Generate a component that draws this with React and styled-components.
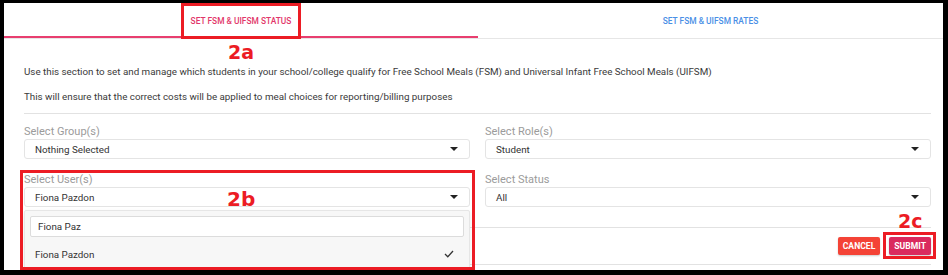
import React from 'react';
import styled, { createGlobalStyle, css } from 'styled-components';

const Global = createGlobalStyle`
  html, body { margin: 0; padding: 0; background: #fff; }
  body { font-family: Roboto, "Liberation Sans", Arial, sans-serif; }
  * { box-sizing: border-box; }
`;

const RED = '#ec1c24';

const Frame = styled.div`
  width: 948px;
  height: 275px;
  border-style: solid;
  border-color: #000;
  border-width: 3px 5px 5px 4px;
  background: #fff;
  overflow: hidden;
`;

const TabBar = styled.div`
  display: grid;
  grid-template-columns: 474px 1fr;
  height: 36px;
  border-bottom: 1px solid #e6e6e6;
`;

const Tab = styled.div`
  display: flex;
  justify-content: center;
  align-items: stretch;
  font-size: 8.4px;
  font-weight: 500;
  text-transform: uppercase;
  color: ${p => (p.$active ? '#e2366a' : '#4a8fe6')};
  box-shadow: ${p => (p.$active ? 'inset 0 -2px 0 #e83e6f' : 'none')};
`;

const TabLabel = styled.span`
  position: relative;
  display: flex;
  align-items: center;
  ${p =>
    p.$marked &&
    css`
      &::after {
        content: '';
        position: absolute;
        top: 0;
        bottom: -1px;
        left: -10px;
        right: -10px;
        border: 3px solid ${RED};
      }
    `}
`;

const Note = styled.span`
  position: absolute;
  font-family: "DejaVu Sans", Verdana, sans-serif;
  font-weight: 700;
  font-size: 19px;
  line-height: 20px;
  color: ${RED};
  text-transform: none;
  white-space: nowrap;
`;

const TabNote = styled(Note)`
  top: calc(100% + 4px);
  left: 50%;
  transform: translateX(-50%);
`;

const Body = styled.div`
  padding: 0 12px 0 20px;
`;

const Para = styled.p`
  margin: ${p => (p.$first ? '25px' : '9px')} 0 0;
  font-size: 9.8px;
  line-height: 16px;
  color: #3a3a3a;
`;

const Rule = styled.div`
  height: 1px;
  background: #e2e2e2;
  margin-top: 8px;
`;

const Grid = styled.div`
  display: grid;
  grid-template-columns: 1fr 1fr;
  column-gap: 15px;
  row-gap: 14px;
  margin-top: 11px;
`;

const Field = styled.div`
  position: relative;
  ${p =>
    p.$marked &&
    css`
      &::after {
        content: '';
        position: absolute;
        top: -3px;
        left: -4px;
        right: -5px;
        bottom: -63px;
        border: 3px solid ${RED};
        pointer-events: none;
        z-index: 3;
      }
    `}
`;

const Label = styled.div`
  font-size: 11px;
  line-height: 14px;
  color: #9b9b9b;
`;

const Select = styled.div`
  height: 20px;
  border: 1px solid #e4e4e4;
  border-radius: 3px;
  padding: 0 10px;
  display: flex;
  align-items: center;
  justify-content: space-between;
  font-size: 9.8px;
  color: #333;
  background: #fff;
`;

const Caret = styled.span`
  width: 0;
  height: 0;
  border-left: 4px solid transparent;
  border-right: 4px solid transparent;
  border-top: 4px solid #222;
  margin-right: 1px;
`;

const FieldNote = styled(Note)`
  top: 16px;
  left: 203px;
  font-size: 20px;
`;

const Dropdown = styled.div`
  position: absolute;
  top: calc(100% + 3px);
  left: 0;
  right: 0;
  background: #f7f7f7;
  border: 1px solid #e6e6e6;
  border-radius: 2px;
  box-shadow: 0 2px 4px rgba(0, 0, 0, 0.08);
  padding: 5px 5px 0;
  z-index: 2;
`;

const Search = styled.div`
  height: 21px;
  background: #fff;
  border: 1px solid #dcdcdc;
  border-radius: 2px;
  padding: 0 7px;
  display: flex;
  align-items: center;
  font-size: 9.8px;
  color: #333;
`;

const Option = styled.div`
  height: 34px;
  display: flex;
  align-items: center;
  justify-content: space-between;
  padding: 0 10px 0 5px;
  font-size: 9.8px;
  color: #333;
`;

const Footer = styled.div`
  margin-top: 20px;
  border-top: 1px solid #e2e2e2;
  border-bottom: 1px solid #e2e2e2;
  padding: 9px 0 9px;
  display: flex;
  justify-content: flex-end;
  gap: 9px;
`;

const Button = styled.button`
  height: 18px;
  border: 0;
  border-radius: 2px;
  padding: 0 5px;
  font-family: Roboto, "Liberation Sans", Arial, sans-serif;
  font-size: 8.6px;
  font-weight: 700;
  color: #fff;
  background: ${p => (p.$primary ? '#da2a5e' : '#f44336')};
  text-transform: uppercase;
  box-shadow: 0 1px 2px rgba(0, 0, 0, 0.2);
`;

const Marked = styled.span`
  position: relative;
  display: inline-flex;
  &::after {
    content: '';
    position: absolute;
    top: -5px;
    bottom: -4px;
    left: -6px;
    right: -5px;
    border: 3px solid ${RED};
  }
`;

const ButtonNote = styled(Note)`
  bottom: calc(100% + 6px);
  left: 50%;
  transform: translateX(-50%);
`;

const Check = () => (
  <svg width="10" height="8" viewBox="0 0 10 8">
    <polyline points="1,4 3.8,6.8 9,1" fill="none" stroke="#333" strokeWidth="1.3" />
  </svg>
);

export default function App() {
  return (
    <>
      <Global />
      <Frame>
        <TabBar>
          <Tab $active>
            <TabLabel $marked>
              SET FSM &amp; UIFSM STATUS
              <TabNote>2a</TabNote>
            </TabLabel>
          </Tab>
          <Tab>
            <TabLabel>SET FSM &amp; UIFSM RATES</TabLabel>
          </Tab>
        </TabBar>
        <Body>
          <Para $first>
            Use this section to set and manage which students in your school/college qualify for Free School Meals (FSM) and Universal Infant Free School Meals (UIFSM)
          </Para>
          <Para>This will ensure that the correct costs will be applied to meal choices for reporting/billing purposes</Para>
          <Rule />
          <Grid>
            <Field>
              <Label>Select Group(s)</Label>
              <Select>
                Nothing Selected
                <Caret />
              </Select>
            </Field>
            <Field>
              <Label>Select Role(s)</Label>
              <Select>
                Student
                <Caret />
              </Select>
            </Field>
            <Field $marked>
              <Label>Select User(s)</Label>
              <Select>
                Fiona Pazdon
                <Caret />
              </Select>
              <FieldNote>2b</FieldNote>
              <Dropdown>
                <Search>Fiona Paz</Search>
                <Option>
                  Fiona Pazdon
                  <Check />
                </Option>
              </Dropdown>
            </Field>
            <Field>
              <Label>Select Status</Label>
              <Select>
                All
                <Caret />
              </Select>
            </Field>
          </Grid>
          <Footer>
            <Button>Cancel</Button>
            <Marked>
              <Button $primary>Submit</Button>
              <ButtonNote>2c</ButtonNote>
            </Marked>
          </Footer>
        </Body>
      </Frame>
    </>
  );
}
